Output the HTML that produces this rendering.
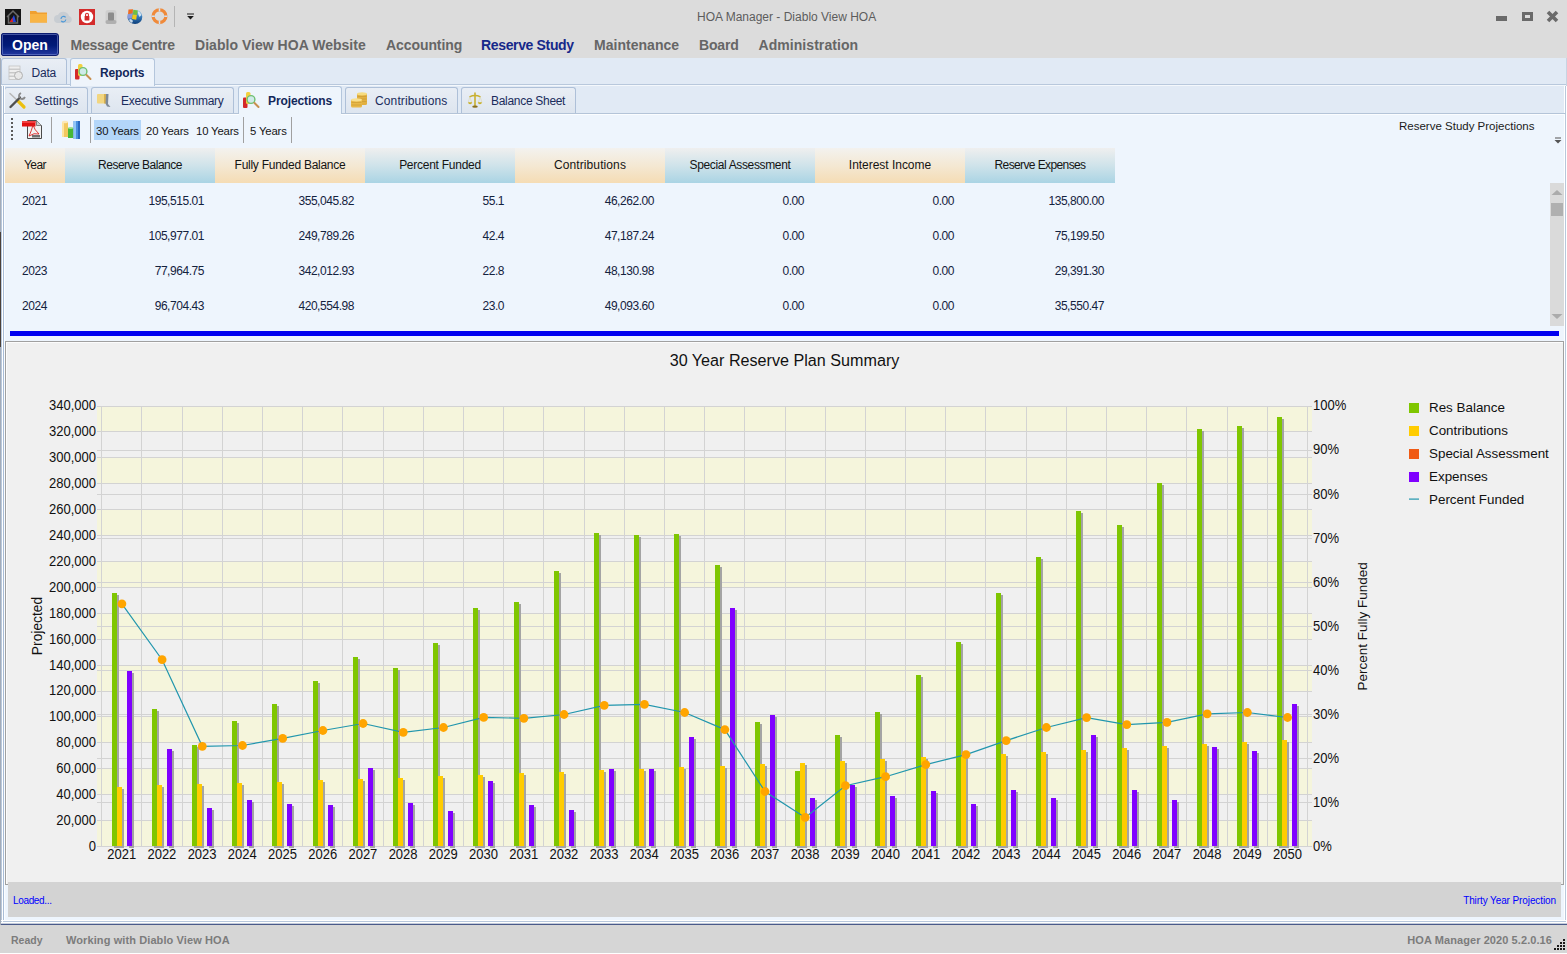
<!DOCTYPE html>
<html><head><meta charset="utf-8"><title>HOA Manager - Diablo View HOA</title>
<style>
*{margin:0;padding:0;box-sizing:border-box}
html,body{width:1567px;height:954px;overflow:hidden;background:#dcdcdc;font-family:"Liberation Sans", sans-serif;}
.a{position:absolute}
.t{position:absolute;white-space:nowrap;line-height:1}
.menu{font-weight:bold;font-size:14px;color:#666;letter-spacing:-0.2px}
.tab{position:absolute;border:1px solid #aec0d8;border-bottom:none;border-radius:3px 3px 0 0;background:linear-gradient(#e9eef5,#dde5ef)}
.tab.sel{background:#eef4fb;border-color:#b4c6dc}
.tabtxt{position:absolute;white-space:nowrap;line-height:1;font-size:12px;color:#1a2c5c}
.hdr{position:absolute;top:148px;height:35px;font-size:12px;color:#141414;text-align:center;line-height:35px}
.hp{background:linear-gradient(#f3f2ef 0%,#f4e8d3 50%,#f5dcb4 100%)}
.hb{background:linear-gradient(#efefef 0%,#cfe3ea 50%,#aad4e4 100%)}
.cell{position:absolute;font-size:12px;letter-spacing:-0.45px;color:#14223e;line-height:1;white-space:nowrap}
</style></head><body>

<div class="a" style="left:0;top:0;width:1567px;height:58px;background:#dcdcdc"></div>
<svg class="a" style="left:0;top:0" width="200" height="32" viewBox="0 0 200 32">
<rect x="5" y="9" width="16" height="16" fill="#161616"/>
<path d="M7 17 L13 11 L19 17 M8.5 16 V23 H17.5 V16" fill="none" stroke="#6a6a6a" stroke-width="1.5"/>
<path d="M10 22 L14 15 L16 22 Z" fill="#2046e0"/><path d="M9.5 22 L12.5 17.5 L13 22Z" fill="#e02020"/>
<path d="M30 11 h6 l1.5 1.5 h9.5 v10 h-17 z" fill="#f0a030"/><rect x="30" y="14" width="17" height="8.5" fill="#f8b445"/>
<path d="M58 23 a4 4 0 0 1 0-8 a6 6 0 0 1 11 1 a3.6 3.6 0 0 1 0 7z" fill="#c8cdd2"/>
<path d="M61 19 a2.6 2.6 0 0 1 4.6-1.6 M65.8 19.5 a2.6 2.6 0 0 1-4.6 1.4" fill="none" stroke="#4a98d8" stroke-width="1.1"/>
<rect x="79" y="9" width="16" height="16" fill="#d42b2b"/><circle cx="87" cy="17" r="6.2" fill="#fff"/>
<rect x="84.6" y="16" width="4.8" height="4.5" rx="0.6" fill="#d42b2b"/><path d="M85.6 16.2 v-1.6 a1.4 1.4 0 0 1 2.8 0 v1.6" fill="none" stroke="#d42b2b" stroke-width="1.1"/>
<rect x="105.5" y="10" width="11" height="14" rx="2.5" fill="#cfcfcf"/><rect x="105.5" y="20" width="11" height="4" rx="2" fill="#b0b0b0"/><rect x="108" y="12.5" width="6" height="8" rx="1" fill="#8c8c8c"/>
<defs><linearGradient id="gl" x1="0" y1="0" x2="0" y2="1"><stop offset="0" stop-color="#b8dcf0"/><stop offset="0.45" stop-color="#3a80c0"/><stop offset="1" stop-color="#0a3c78"/></linearGradient></defs>
<circle cx="135" cy="16.8" r="7.3" fill="url(#gl)"/>
<path d="M137.5 11 q3 1 4 4 l-2 2 -1-2z M130 19 q2 0 3 2 l-1 2 q-2-1-3-3z" fill="#e8f2f8" opacity="0.85"/>
<path d="M128.5 9.5 l4.5 -0.3 -0.4 4.3 -4.6 0.5z" fill="#f06a20"/><path d="M133.3 9.8 l4.5 0.6 -0.8 4.6 -4 -0.6z" fill="#70c040"/>
<path d="M127.6 14.2 l4.7 -0.4 -0.5 4.6 -4.6 0.4z" fill="#8a9ad8"/><path d="M132.5 14.5 l4.3 0.6 -0.6 4.6 -4.2 -0.7z" fill="#f0c818"/>
<circle cx="159.5" cy="16.2" r="6.4" fill="none" stroke="#f08a3a" stroke-width="3.2"/>
<path d="M159.5 8.3 v3.2 M159.5 20.9 v3.2 M151.6 16.2 h3.2 M164.2 16.2 h3.2" stroke="#d0e2f4" stroke-width="1.5"/>
<rect x="174" y="6" width="1" height="21" fill="#b4b4b4"/>
<rect x="187" y="13.5" width="7" height="1" fill="#1a1a1a"/><path d="M187.2 16 h6.6 l-3.3 3.5z" fill="#1a1a1a"/>
</svg>
<div class="t" style="left:697px;top:11px;font-size:12px;color:#5c5c5c">HOA Manager - Diablo View HOA</div>
<svg class="a" style="left:1490px;top:5px" width="77" height="24" viewBox="1490 5 77 24">
<rect x="1496" y="16" width="11" height="5" fill="#6a6a6a"/>
<path d="M1522 12 h11 v9 h-11z M1525 15 v3 h5 v-3z" fill="#6a6a6a" fill-rule="evenodd"/>
<path d="M1548 12 L1557 21 M1557 12 L1548 21" stroke="#6a6a6a" stroke-width="3.6"/>
</svg>
<div class="a" style="left:1px;top:33px;width:58px;height:23px;border-radius:2px 3px 3px 2px;background:linear-gradient(#001068,#001a78 55%,#2238a0);border:1px solid #0c1c70;box-shadow:inset 0 0 0 1px rgba(120,140,210,0.55)"></div>
<div class="t menu" style="left:12px;top:38px;color:#fff;letter-spacing:0">Open</div>
<div class="t menu" style="left:70.5px;top:38px;color:#666;letter-spacing:-0.22px">Message Centre</div>
<div class="t menu" style="left:195px;top:38px;color:#666;letter-spacing:0.03px">Diablo View HOA Website</div>
<div class="t menu" style="left:386px;top:38px;color:#666;letter-spacing:-0.08px">Accounting</div>
<div class="t menu" style="left:481px;top:38px;color:#16288a;letter-spacing:-0.35px">Reserve Study</div>
<div class="t menu" style="left:594px;top:38px;color:#666;letter-spacing:0.03px">Maintenance</div>
<div class="t menu" style="left:699px;top:38px;color:#666;letter-spacing:-0.17px">Board</div>
<div class="t menu" style="left:758.5px;top:38px;color:#666;letter-spacing:0.06px">Administration</div>
<div class="a" style="left:0;top:58px;width:1567px;height:897px;background:#e1eaf5"></div>
<div class="a" style="left:0;top:58px;width:1px;height:897px;background:#a4acb8"></div>
<div class="a" style="left:1566px;top:58px;width:1px;height:30px;background:#c8d4e2"></div>
<div class="a" style="left:0;top:232px;width:1px;height:115px;background:#4a4038"></div>
<div class="a" style="left:1px;top:84px;width:1565px;height:1px;background:#b8c8dc"></div>
<div class="a" style="left:1px;top:85px;width:1565px;height:1px;background:#f4f8fc"></div>
<div class="tab" style="left:1px;top:58px;width:66px;height:26px"></div>
<div class="tab sel" style="left:70px;top:58px;width:85px;height:28px"></div>
<div class="tabtxt" style="left:31.5px;top:67px;letter-spacing:-0.2px">Data</div>
<div class="tabtxt" style="left:100px;top:67px;letter-spacing:-0.15px;font-weight:bold;color:#13285a">Reports</div>
<svg class="a" style="left:0;top:56px" width="160" height="30" viewBox="0 56 160 30">
<g fill="#eeeeee" stroke="#c4c4c4" stroke-width="0.8"><rect x="9" y="66" width="11" height="3"/><rect x="9" y="69.5" width="11" height="3"/><rect x="9" y="73" width="11" height="3"/><rect x="9" y="76.5" width="10" height="3"/></g>
<circle cx="18.5" cy="75.5" r="4" fill="#e8e8e8" stroke="#b0b0b0" stroke-width="1"/>
<rect x="75" y="69" width="4.5" height="10.5" rx="1" fill="#d42a2a"/><rect x="78" y="64" width="4.5" height="12" rx="1.5" fill="#f2d040"/>
<circle cx="83" cy="71.5" r="3.9" fill="#cfeaea" stroke="#70c070" stroke-width="1.4"/><path d="M86.5 75 L90.5 79" stroke="#c89050" stroke-width="2" stroke-linecap="round"/>
</svg>
<div class="a" style="left:1px;top:113px;width:1565px;height:1px;background:#b4c4d8"></div>
<div class="tab" style="left:4px;top:87px;width:84px;height:26px"></div>
<div class="tab" style="left:91px;top:87px;width:143px;height:26px"></div>
<div class="tab sel" style="left:238px;top:86px;width:104px;height:28px;background:#eef5fc"></div>
<div class="tab" style="left:345px;top:87px;width:113px;height:26px"></div>
<div class="tab" style="left:461px;top:87px;width:115px;height:26px"></div>
<div class="tabtxt" style="left:34.5px;top:94.5px;letter-spacing:0.05px">Settings</div>
<div class="tabtxt" style="left:121px;top:94.5px;letter-spacing:-0.24px">Executive Summary</div>
<div class="tabtxt" style="left:268px;top:94.5px;letter-spacing:-0.11px;font-weight:bold;color:#13285a">Projections</div>
<div class="tabtxt" style="left:375px;top:94.5px;letter-spacing:0.13px">Contributions</div>
<div class="tabtxt" style="left:491px;top:94.5px;letter-spacing:-0.3px">Balance Sheet</div>
<svg class="a" style="left:0;top:86px" width="560" height="28" viewBox="0 86 560 28">
<path d="M10 93.5 L17.5 100.5" stroke="#b8b8b8" stroke-width="1.6" stroke-linecap="round"/>
<path d="M18.5 101.5 L24 107" stroke="#ecc010" stroke-width="3.2" stroke-linecap="round"/>
<path d="M10.5 107 L20 97.5" stroke="#505050" stroke-width="2.4" stroke-linecap="round"/>
<path d="M19.5 98 q-1.5-3.5 1.5-5 M20 98.5 q3.5 1.5 5-1.5" fill="none" stroke="#8a8a8a" stroke-width="1.8"/>
<rect x="97" y="94" width="9.5" height="9.5" rx="1" fill="#f2d680"/><rect x="104" y="94" width="2.5" height="9.5" fill="#d8b050"/>
<path d="M106 94 l2.5 0 -0.5 10 2.5 3 -3.5 -0.5 -1.5 -3z" fill="#7e8a98"/>
<rect x="243" y="97.5" width="4.5" height="10.5" rx="1" fill="#d42a2a"/><rect x="246" y="92" width="4.5" height="12" rx="1.5" fill="#f2d040"/>
<circle cx="251" cy="99.5" r="3.9" fill="#cfeaea" stroke="#70c070" stroke-width="1.4"/><path d="M254.5 103 L258.5 107" stroke="#c89050" stroke-width="2" stroke-linecap="round"/>
<rect x="357" y="93.5" width="10" height="11.5" rx="1.5" fill="#e2b040"/><ellipse cx="362" cy="93.8" rx="5" ry="1.6" fill="#f6dc80"/>
<path d="M357.5 96.5 h9 M357.5 99 h9 M357.5 101.5 h9" stroke="#c89830" stroke-width="0.6"/>
<rect x="351" y="99.5" width="11" height="8" rx="1.5" fill="#e8b848"/><ellipse cx="356.5" cy="99.8" rx="5.5" ry="1.6" fill="#f8e090"/>
<path d="M351.5 102.5 h10 M351.5 105 h10" stroke="#c89830" stroke-width="0.6"/>
<path d="M475 92.5 V106" stroke="#c8b030" stroke-width="1.6"/>
<path d="M469.5 96.8 Q475 94 480.5 96.8" fill="none" stroke="#c8b030" stroke-width="1.5"/>
<path d="M469.8 97 L468.2 102.5 M469.8 97 L471.8 102.5 M480.2 97 L478.2 102.5 M480.2 97 L482 102.5" stroke="#d8d0a0" stroke-width="0.5"/>
<path d="M468 102.3 h4.2 q-0.3 1.9 -2.1 1.9 q-1.8 0 -2.1 -1.9z M477.8 102.3 h4.2 q-0.3 1.9 -2.1 1.9 q-1.8 0 -2.1 -1.9z" fill="#c8b028"/>
<ellipse cx="475" cy="106.7" rx="2.8" ry="1.1" fill="#8a7020"/>
</svg>
<div class="a" style="left:4px;top:114px;width:1561px;height:807px;background:#eef5fd"></div>
<div class="a" style="left:1px;top:86px;width:1px;height:838px;background:#b8c8dc"></div>
<div class="a" style="left:2px;top:86px;width:1px;height:838px;background:#ffffff"></div>
<div class="a" style="left:3px;top:86px;width:1px;height:838px;background:#a8bcd6"></div>
<div class="a" style="left:4px;top:86px;width:1px;height:838px;background:#fbfdff"></div>
<div class="a" style="left:1564px;top:86px;width:1px;height:838px;background:#ffffff"></div>
<div class="a" style="left:1565px;top:86px;width:1px;height:838px;background:#b8c8dc"></div>
<div class="a" style="left:1566px;top:86px;width:1px;height:838px;background:#ffffff"></div>
<div class="a" style="left:3px;top:113px;width:1563px;height:1px;background:#b4c4d8"></div>
<div class="a" style="left:4px;top:114px;width:1561px;height:1px;background:#fbfdff"></div>
<div class="a" style="left:239px;top:112px;width:102px;height:3px;background:#eef5fc"></div>
<svg class="a" style="left:0;top:114px" width="300" height="34" viewBox="0 114 300 34">
<g fill="#5c5c5c"><rect x="11" y="118" width="2" height="2"/><rect x="11" y="122" width="2" height="2"/><rect x="11" y="126" width="2" height="2"/><rect x="11" y="130" width="2" height="2"/><rect x="11" y="134" width="2" height="2"/><rect x="11" y="138" width="2" height="2"/></g>
<path d="M27.5 120.5 h9 l5 5 v13 h-14z" fill="#f2f2f2" stroke="#4a4a4a" stroke-width="1"/>
<path d="M36.5 120.5 v5 h5" fill="#d0d0d0" stroke="#6a6a6a" stroke-width="0.8"/>
<rect x="22" y="121" width="13.5" height="5.5" fill="#e01010"/><rect x="22" y="121" width="13.5" height="2" fill="#f04040"/>
<path d="M29 136 q2.5-5 4-11 q1.5 5 6 9 q-5-1.5-10 2z" fill="none" stroke="#d82020" stroke-width="0.9"/>
<rect x="32" y="135" width="8" height="2.5" fill="#707070"/>
<rect x="51" y="117" width="1" height="26" fill="#a0a0a0"/>
<rect x="62" y="122" width="6" height="15" fill="#f2c860"/><rect x="62" y="122" width="2" height="15" fill="#fde4a0"/><ellipse cx="65" cy="122" rx="3" ry="1.2" fill="#fbe8b8"/>
<rect x="68" y="128" width="5.5" height="10" fill="#48b838"/><ellipse cx="70.7" cy="128" rx="2.8" ry="1.1" fill="#a0e090"/>
<rect x="73.5" y="121" width="6.5" height="18" fill="#4a90e0"/><rect x="73.5" y="121" width="2.5" height="18" fill="#90c4f8"/><rect x="78" y="121" width="2" height="18" fill="#2a68c0"/>
<rect x="90" y="117" width="1" height="26" fill="#a0a0a0"/>
<rect x="94" y="120" width="47" height="20" fill="#b3d6f9"/>
<rect x="243" y="117" width="1" height="26" fill="#a0a0a0"/>
<rect x="291" y="117" width="1" height="26" fill="#a0a0a0"/>
</svg>
<div class="t" style="left:96px;top:125.5px;font-size:11.3px;letter-spacing:-0.15px;color:#141414">30 Years</div>
<div class="t" style="left:146px;top:125.5px;font-size:11.3px;letter-spacing:-0.15px;color:#141414">20 Years</div>
<div class="t" style="left:196px;top:125.5px;font-size:11.3px;letter-spacing:-0.15px;color:#141414">10 Years</div>
<div class="t" style="left:250px;top:125.5px;font-size:11.3px;letter-spacing:-0.15px;color:#141414">5 Years</div>
<div class="t" style="left:1399px;top:121px;font-size:11.5px;color:#1a1a1a">Reserve Study Projections</div>
<svg class="a" style="left:1552px;top:136px" width="12" height="10"><rect x="3" y="1.5" width="6" height="1" fill="#555"/><path d="M2.5 4 h7 l-3.5 3.5z" fill="#555"/></svg>
<div class="hdr hp" style="left:5px;width:60px;letter-spacing:-0.55px">Year</div>
<div class="hdr hb" style="left:65px;width:150px;letter-spacing:-0.5px">Reserve Balance</div>
<div class="hdr hp" style="left:215px;width:150px;letter-spacing:-0.26px">Fully Funded Balance</div>
<div class="hdr hb" style="left:365px;width:150px;letter-spacing:-0.26px">Percent Funded</div>
<div class="hdr hp" style="left:515px;width:150px;letter-spacing:0.1px">Contributions</div>
<div class="hdr hb" style="left:665px;width:150px;letter-spacing:-0.36px">Special Assessment</div>
<div class="hdr hp" style="left:815px;width:150px;letter-spacing:-0.03px">Interest Income</div>
<div class="hdr hb" style="left:965px;width:150px;letter-spacing:-0.61px">Reserve Expenses</div>
<div class="cell" style="left:22px;top:195px">2021</div>
<div class="cell" style="right:1363px;top:195px">195,515.01</div>
<div class="cell" style="right:1213px;top:195px">355,045.82</div>
<div class="cell" style="right:1063px;top:195px">55.1</div>
<div class="cell" style="right:913px;top:195px">46,262.00</div>
<div class="cell" style="right:763px;top:195px">0.00</div>
<div class="cell" style="right:613px;top:195px">0.00</div>
<div class="cell" style="right:463px;top:195px">135,800.00</div>
<div class="cell" style="left:22px;top:230px">2022</div>
<div class="cell" style="right:1363px;top:230px">105,977.01</div>
<div class="cell" style="right:1213px;top:230px">249,789.26</div>
<div class="cell" style="right:1063px;top:230px">42.4</div>
<div class="cell" style="right:913px;top:230px">47,187.24</div>
<div class="cell" style="right:763px;top:230px">0.00</div>
<div class="cell" style="right:613px;top:230px">0.00</div>
<div class="cell" style="right:463px;top:230px">75,199.50</div>
<div class="cell" style="left:22px;top:265px">2023</div>
<div class="cell" style="right:1363px;top:265px">77,964.75</div>
<div class="cell" style="right:1213px;top:265px">342,012.93</div>
<div class="cell" style="right:1063px;top:265px">22.8</div>
<div class="cell" style="right:913px;top:265px">48,130.98</div>
<div class="cell" style="right:763px;top:265px">0.00</div>
<div class="cell" style="right:613px;top:265px">0.00</div>
<div class="cell" style="right:463px;top:265px">29,391.30</div>
<div class="cell" style="left:22px;top:300px">2024</div>
<div class="cell" style="right:1363px;top:300px">96,704.43</div>
<div class="cell" style="right:1213px;top:300px">420,554.98</div>
<div class="cell" style="right:1063px;top:300px">23.0</div>
<div class="cell" style="right:913px;top:300px">49,093.60</div>
<div class="cell" style="right:763px;top:300px">0.00</div>
<div class="cell" style="right:613px;top:300px">0.00</div>
<div class="cell" style="right:463px;top:300px">35,550.47</div>
<svg class="a" style="left:1550px;top:183px" width="14" height="143" viewBox="1550 183 14 143">
<rect x="1550" y="183" width="14" height="143" fill="#dadada"/>
<path d="M1551.5 195 h11 l-5.5 -5z" fill="#ababab"/>
<rect x="1551" y="203" width="12" height="13" fill="#b0b0b0"/>
<path d="M1551.5 314 h11 l-5.5 5z" fill="#ababab"/>
</svg>
<div class="a" style="left:10px;top:331px;width:1549px;height:5px;background:#0000f0"></div>
<div class="a" style="left:5px;top:341px;width:1559px;height:544px;background:#f0f0f0;border:1px solid #a0a0a0;box-shadow:inset 1px 1px 0 #fcfcfc"></div>
<svg class="a" style="left:0;top:0" width="1567" height="954" viewBox="0 0 1567 954" font-family='"Liberation Sans", sans-serif'>
<rect x="97" y="820.00" width="1215" height="26.00" fill="#f5f5dc"/>
<rect x="97" y="768.00" width="1215" height="26.00" fill="#f5f5dc"/>
<rect x="97" y="716.00" width="1215" height="26.00" fill="#f5f5dc"/>
<rect x="97" y="665.00" width="1215" height="26.00" fill="#f5f5dc"/>
<rect x="97" y="613.00" width="1215" height="26.00" fill="#f5f5dc"/>
<rect x="97" y="561.00" width="1215" height="26.00" fill="#f5f5dc"/>
<rect x="97" y="509.00" width="1215" height="26.00" fill="#f5f5dc"/>
<rect x="97" y="457.00" width="1215" height="26.00" fill="#f5f5dc"/>
<rect x="97" y="406.00" width="1215" height="25.00" fill="#f5f5dc"/>
<path d="M97 846.5H1312M97 820.5H1312M97 794.5H1312M97 768.5H1312M97 742.5H1312M97 716.5H1312M97 691.5H1312M97 665.5H1312M97 639.5H1312M97 613.5H1312M97 587.5H1312M97 561.5H1312M97 535.5H1312M97 509.5H1312M97 483.5H1312M97 457.5H1312M97 431.5H1312M97 406.5H1312M97 846.5H1312M97 802.5H1312M97 758.5H1312M97 714.5H1312M97 670.5H1312M97 626.5H1312M97 582.5H1312M97 538.5H1312M97 494.5H1312M97 450.5H1312M97 406.5H1312M101.5 406V846M141.5 406V846M182.5 406V846M222.5 406V846M262.5 406V846M302.5 406V846M342.5 406V846M383.5 406V846M423.5 406V846M463.5 406V846M503.5 406V846M543.5 406V846M584.5 406V846M624.5 406V846M664.5 406V846M704.5 406V846M744.5 406V846M785.5 406V846M825.5 406V846M865.5 406V846M905.5 406V846M945.5 406V846M985.5 406V846M1026.5 406V846M1066.5 406V846M1106.5 406V846M1146.5 406V846M1186.5 406V846M1227.5 406V846M1267.5 406V846M1307.5 406V846" stroke="#d3d3d3" stroke-width="1" fill="none"/>
<g shape-rendering="crispEdges"><rect x="114" y="595" width="5" height="253" fill="#a4a4a4"/><rect x="112" y="593" width="5" height="253" fill="#7fc600"/><rect x="119" y="789" width="5" height="59" fill="#a4a4a4"/><rect x="117" y="787" width="5" height="59" fill="#ffcc00"/><rect x="129" y="673" width="5" height="175" fill="#a4a4a4"/><rect x="127" y="671" width="5" height="175" fill="#8000ff"/><rect x="154" y="711" width="5" height="137" fill="#a4a4a4"/><rect x="152" y="709" width="5" height="137" fill="#7fc600"/><rect x="159" y="787" width="5" height="61" fill="#a4a4a4"/><rect x="157" y="785" width="5" height="61" fill="#ffcc00"/><rect x="169" y="751" width="5" height="97" fill="#a4a4a4"/><rect x="167" y="749" width="5" height="97" fill="#8000ff"/><rect x="194" y="747" width="5" height="101" fill="#a4a4a4"/><rect x="192" y="745" width="5" height="101" fill="#7fc600"/><rect x="199" y="786" width="5" height="62" fill="#a4a4a4"/><rect x="197" y="784" width="5" height="62" fill="#ffcc00"/><rect x="209" y="810" width="5" height="38" fill="#a4a4a4"/><rect x="207" y="808" width="5" height="38" fill="#8000ff"/><rect x="234" y="723" width="5" height="125" fill="#a4a4a4"/><rect x="232" y="721" width="5" height="125" fill="#7fc600"/><rect x="239" y="785" width="5" height="63" fill="#a4a4a4"/><rect x="237" y="783" width="5" height="63" fill="#ffcc00"/><rect x="249" y="802" width="5" height="46" fill="#a4a4a4"/><rect x="247" y="800" width="5" height="46" fill="#8000ff"/><rect x="274" y="706" width="5" height="142" fill="#a4a4a4"/><rect x="272" y="704" width="5" height="142" fill="#7fc600"/><rect x="279" y="784" width="5" height="64" fill="#a4a4a4"/><rect x="277" y="782" width="5" height="64" fill="#ffcc00"/><rect x="289" y="806" width="5" height="42" fill="#a4a4a4"/><rect x="287" y="804" width="5" height="42" fill="#8000ff"/><rect x="315" y="683" width="5" height="165" fill="#a4a4a4"/><rect x="313" y="681" width="5" height="165" fill="#7fc600"/><rect x="320" y="782" width="5" height="66" fill="#a4a4a4"/><rect x="318" y="780" width="5" height="66" fill="#ffcc00"/><rect x="330" y="807" width="5" height="41" fill="#a4a4a4"/><rect x="328" y="805" width="5" height="41" fill="#8000ff"/><rect x="355" y="659" width="5" height="189" fill="#a4a4a4"/><rect x="353" y="657" width="5" height="189" fill="#7fc600"/><rect x="360" y="781" width="5" height="67" fill="#a4a4a4"/><rect x="358" y="779" width="5" height="67" fill="#ffcc00"/><rect x="370" y="770" width="5" height="78" fill="#a4a4a4"/><rect x="368" y="768" width="5" height="78" fill="#8000ff"/><rect x="395" y="670" width="5" height="178" fill="#a4a4a4"/><rect x="393" y="668" width="5" height="178" fill="#7fc600"/><rect x="400" y="780" width="5" height="68" fill="#a4a4a4"/><rect x="398" y="778" width="5" height="68" fill="#ffcc00"/><rect x="410" y="805" width="5" height="43" fill="#a4a4a4"/><rect x="408" y="803" width="5" height="43" fill="#8000ff"/><rect x="435" y="645" width="5" height="203" fill="#a4a4a4"/><rect x="433" y="643" width="5" height="203" fill="#7fc600"/><rect x="440" y="778" width="5" height="70" fill="#a4a4a4"/><rect x="438" y="776" width="5" height="70" fill="#ffcc00"/><rect x="450" y="813" width="5" height="35" fill="#a4a4a4"/><rect x="448" y="811" width="5" height="35" fill="#8000ff"/><rect x="475" y="610" width="5" height="238" fill="#a4a4a4"/><rect x="473" y="608" width="5" height="238" fill="#7fc600"/><rect x="480" y="777" width="5" height="71" fill="#a4a4a4"/><rect x="478" y="775" width="5" height="71" fill="#ffcc00"/><rect x="490" y="783" width="5" height="65" fill="#a4a4a4"/><rect x="488" y="781" width="5" height="65" fill="#8000ff"/><rect x="516" y="604" width="5" height="244" fill="#a4a4a4"/><rect x="514" y="602" width="5" height="244" fill="#7fc600"/><rect x="521" y="775" width="5" height="73" fill="#a4a4a4"/><rect x="519" y="773" width="5" height="73" fill="#ffcc00"/><rect x="531" y="807" width="5" height="41" fill="#a4a4a4"/><rect x="529" y="805" width="5" height="41" fill="#8000ff"/><rect x="556" y="573" width="5" height="275" fill="#a4a4a4"/><rect x="554" y="571" width="5" height="275" fill="#7fc600"/><rect x="561" y="774" width="5" height="74" fill="#a4a4a4"/><rect x="559" y="772" width="5" height="74" fill="#ffcc00"/><rect x="571" y="812" width="5" height="36" fill="#a4a4a4"/><rect x="569" y="810" width="5" height="36" fill="#8000ff"/><rect x="596" y="535" width="5" height="313" fill="#a4a4a4"/><rect x="594" y="533" width="5" height="313" fill="#7fc600"/><rect x="601" y="772" width="5" height="76" fill="#a4a4a4"/><rect x="599" y="770" width="5" height="76" fill="#ffcc00"/><rect x="611" y="771" width="5" height="77" fill="#a4a4a4"/><rect x="609" y="769" width="5" height="77" fill="#8000ff"/><rect x="636" y="537" width="5" height="311" fill="#a4a4a4"/><rect x="634" y="535" width="5" height="311" fill="#7fc600"/><rect x="641" y="771" width="5" height="77" fill="#a4a4a4"/><rect x="639" y="769" width="5" height="77" fill="#ffcc00"/><rect x="651" y="771" width="5" height="77" fill="#a4a4a4"/><rect x="649" y="769" width="5" height="77" fill="#8000ff"/><rect x="676" y="536" width="5" height="312" fill="#a4a4a4"/><rect x="674" y="534" width="5" height="312" fill="#7fc600"/><rect x="681" y="769" width="5" height="79" fill="#a4a4a4"/><rect x="679" y="767" width="5" height="79" fill="#ffcc00"/><rect x="691" y="739" width="5" height="109" fill="#a4a4a4"/><rect x="689" y="737" width="5" height="109" fill="#8000ff"/><rect x="717" y="567" width="5" height="281" fill="#a4a4a4"/><rect x="715" y="565" width="5" height="281" fill="#7fc600"/><rect x="722" y="768" width="5" height="80" fill="#a4a4a4"/><rect x="720" y="766" width="5" height="80" fill="#ffcc00"/><rect x="732" y="610" width="5" height="238" fill="#a4a4a4"/><rect x="730" y="608" width="5" height="238" fill="#8000ff"/><rect x="757" y="724" width="5" height="124" fill="#a4a4a4"/><rect x="755" y="722" width="5" height="124" fill="#7fc600"/><rect x="762" y="766" width="5" height="82" fill="#a4a4a4"/><rect x="760" y="764" width="5" height="82" fill="#ffcc00"/><rect x="772" y="717" width="5" height="131" fill="#a4a4a4"/><rect x="770" y="715" width="5" height="131" fill="#8000ff"/><rect x="797" y="773" width="5" height="75" fill="#a4a4a4"/><rect x="795" y="771" width="5" height="75" fill="#7fc600"/><rect x="802" y="765" width="5" height="83" fill="#a4a4a4"/><rect x="800" y="763" width="5" height="83" fill="#ffcc00"/><rect x="812" y="800" width="5" height="48" fill="#a4a4a4"/><rect x="810" y="798" width="5" height="48" fill="#8000ff"/><rect x="837" y="737" width="5" height="111" fill="#a4a4a4"/><rect x="835" y="735" width="5" height="111" fill="#7fc600"/><rect x="842" y="763" width="5" height="85" fill="#a4a4a4"/><rect x="840" y="761" width="5" height="85" fill="#ffcc00"/><rect x="852" y="787" width="5" height="61" fill="#a4a4a4"/><rect x="850" y="785" width="5" height="61" fill="#8000ff"/><rect x="877" y="714" width="5" height="134" fill="#a4a4a4"/><rect x="875" y="712" width="5" height="134" fill="#7fc600"/><rect x="882" y="761" width="5" height="87" fill="#a4a4a4"/><rect x="880" y="759" width="5" height="87" fill="#ffcc00"/><rect x="892" y="798" width="5" height="50" fill="#a4a4a4"/><rect x="890" y="796" width="5" height="50" fill="#8000ff"/><rect x="918" y="677" width="5" height="171" fill="#a4a4a4"/><rect x="916" y="675" width="5" height="171" fill="#7fc600"/><rect x="923" y="759" width="5" height="89" fill="#a4a4a4"/><rect x="921" y="757" width="5" height="89" fill="#ffcc00"/><rect x="933" y="793" width="5" height="55" fill="#a4a4a4"/><rect x="931" y="791" width="5" height="55" fill="#8000ff"/><rect x="958" y="644" width="5" height="204" fill="#a4a4a4"/><rect x="956" y="642" width="5" height="204" fill="#7fc600"/><rect x="963" y="758" width="5" height="90" fill="#a4a4a4"/><rect x="961" y="756" width="5" height="90" fill="#ffcc00"/><rect x="973" y="806" width="5" height="42" fill="#a4a4a4"/><rect x="971" y="804" width="5" height="42" fill="#8000ff"/><rect x="998" y="595" width="5" height="253" fill="#a4a4a4"/><rect x="996" y="593" width="5" height="253" fill="#7fc600"/><rect x="1003" y="756" width="5" height="92" fill="#a4a4a4"/><rect x="1001" y="754" width="5" height="92" fill="#ffcc00"/><rect x="1013" y="792" width="5" height="56" fill="#a4a4a4"/><rect x="1011" y="790" width="5" height="56" fill="#8000ff"/><rect x="1038" y="559" width="5" height="289" fill="#a4a4a4"/><rect x="1036" y="557" width="5" height="289" fill="#7fc600"/><rect x="1043" y="754" width="5" height="94" fill="#a4a4a4"/><rect x="1041" y="752" width="5" height="94" fill="#ffcc00"/><rect x="1053" y="800" width="5" height="48" fill="#a4a4a4"/><rect x="1051" y="798" width="5" height="48" fill="#8000ff"/><rect x="1078" y="513" width="5" height="335" fill="#a4a4a4"/><rect x="1076" y="511" width="5" height="335" fill="#7fc600"/><rect x="1083" y="752" width="5" height="96" fill="#a4a4a4"/><rect x="1081" y="750" width="5" height="96" fill="#ffcc00"/><rect x="1093" y="737" width="5" height="111" fill="#a4a4a4"/><rect x="1091" y="735" width="5" height="111" fill="#8000ff"/><rect x="1119" y="527" width="5" height="321" fill="#a4a4a4"/><rect x="1117" y="525" width="5" height="321" fill="#7fc600"/><rect x="1124" y="750" width="5" height="98" fill="#a4a4a4"/><rect x="1122" y="748" width="5" height="98" fill="#ffcc00"/><rect x="1134" y="792" width="5" height="56" fill="#a4a4a4"/><rect x="1132" y="790" width="5" height="56" fill="#8000ff"/><rect x="1159" y="485" width="5" height="363" fill="#a4a4a4"/><rect x="1157" y="483" width="5" height="363" fill="#7fc600"/><rect x="1164" y="748" width="5" height="100" fill="#a4a4a4"/><rect x="1162" y="746" width="5" height="100" fill="#ffcc00"/><rect x="1174" y="802" width="5" height="46" fill="#a4a4a4"/><rect x="1172" y="800" width="5" height="46" fill="#8000ff"/><rect x="1199" y="431" width="5" height="417" fill="#a4a4a4"/><rect x="1197" y="429" width="5" height="417" fill="#7fc600"/><rect x="1204" y="746" width="5" height="102" fill="#a4a4a4"/><rect x="1202" y="744" width="5" height="102" fill="#ffcc00"/><rect x="1214" y="749" width="5" height="99" fill="#a4a4a4"/><rect x="1212" y="747" width="5" height="99" fill="#8000ff"/><rect x="1239" y="428" width="5" height="420" fill="#a4a4a4"/><rect x="1237" y="426" width="5" height="420" fill="#7fc600"/><rect x="1244" y="744" width="5" height="104" fill="#a4a4a4"/><rect x="1242" y="742" width="5" height="104" fill="#ffcc00"/><rect x="1254" y="753" width="5" height="95" fill="#a4a4a4"/><rect x="1252" y="751" width="5" height="95" fill="#8000ff"/><rect x="1279" y="419" width="5" height="429" fill="#a4a4a4"/><rect x="1277" y="417" width="5" height="429" fill="#7fc600"/><rect x="1284" y="742" width="5" height="106" fill="#a4a4a4"/><rect x="1282" y="740" width="5" height="106" fill="#ffcc00"/><rect x="1294" y="706" width="5" height="142" fill="#a4a4a4"/><rect x="1292" y="704" width="5" height="142" fill="#8000ff"/></g>
<polyline points="121.90,603.8 162.09,659.7 202.29,746.3 242.49,745.5 282.68,738.4 322.88,730.5 363.07,723.5 403.26,732.3 443.46,727.5 483.65,717.4 523.85,718.3 564.04,714.5 604.24,705.3 644.43,704.4 684.63,712.5 724.82,729.6 765.02,791.5 805.22,817.4 845.41,785.7 885.61,776.7 925.80,764.6 966.00,754.6 1006.19,740.6 1046.38,727.5 1086.58,717.6 1126.78,724.6 1166.97,722.4 1207.17,713.8 1247.36,712.5 1287.56,717.5" fill="none" stroke="#2196ad" stroke-width="1.2"/>
<circle cx="121.90" cy="603.8" r="4.4" fill="#ffa500"/>
<circle cx="162.09" cy="659.7" r="4.4" fill="#ffa500"/>
<circle cx="202.29" cy="746.3" r="4.4" fill="#ffa500"/>
<circle cx="242.49" cy="745.5" r="4.4" fill="#ffa500"/>
<circle cx="282.68" cy="738.4" r="4.4" fill="#ffa500"/>
<circle cx="322.88" cy="730.5" r="4.4" fill="#ffa500"/>
<circle cx="363.07" cy="723.5" r="4.4" fill="#ffa500"/>
<circle cx="403.26" cy="732.3" r="4.4" fill="#ffa500"/>
<circle cx="443.46" cy="727.5" r="4.4" fill="#ffa500"/>
<circle cx="483.65" cy="717.4" r="4.4" fill="#ffa500"/>
<circle cx="523.85" cy="718.3" r="4.4" fill="#ffa500"/>
<circle cx="564.04" cy="714.5" r="4.4" fill="#ffa500"/>
<circle cx="604.24" cy="705.3" r="4.4" fill="#ffa500"/>
<circle cx="644.43" cy="704.4" r="4.4" fill="#ffa500"/>
<circle cx="684.63" cy="712.5" r="4.4" fill="#ffa500"/>
<circle cx="724.82" cy="729.6" r="4.4" fill="#ffa500"/>
<circle cx="765.02" cy="791.5" r="4.4" fill="#ffa500"/>
<circle cx="805.22" cy="817.4" r="4.4" fill="#ffa500"/>
<circle cx="845.41" cy="785.7" r="4.4" fill="#ffa500"/>
<circle cx="885.61" cy="776.7" r="4.4" fill="#ffa500"/>
<circle cx="925.80" cy="764.6" r="4.4" fill="#ffa500"/>
<circle cx="966.00" cy="754.6" r="4.4" fill="#ffa500"/>
<circle cx="1006.19" cy="740.6" r="4.4" fill="#ffa500"/>
<circle cx="1046.38" cy="727.5" r="4.4" fill="#ffa500"/>
<circle cx="1086.58" cy="717.6" r="4.4" fill="#ffa500"/>
<circle cx="1126.78" cy="724.6" r="4.4" fill="#ffa500"/>
<circle cx="1166.97" cy="722.4" r="4.4" fill="#ffa500"/>
<circle cx="1207.17" cy="713.8" r="4.4" fill="#ffa500"/>
<circle cx="1247.36" cy="712.5" r="4.4" fill="#ffa500"/>
<circle cx="1287.56" cy="717.5" r="4.4" fill="#ffa500"/>
<text x="96" y="850.9" text-anchor="end" font-size="13.8" textLength="7.23" lengthAdjust="spacingAndGlyphs" fill="#111">0</text>
<text x="96" y="825.0" text-anchor="end" font-size="13.8" textLength="39.76" lengthAdjust="spacingAndGlyphs" fill="#111">20,000</text>
<text x="96" y="799.1" text-anchor="end" font-size="13.8" textLength="39.76" lengthAdjust="spacingAndGlyphs" fill="#111">40,000</text>
<text x="96" y="773.2" text-anchor="end" font-size="13.8" textLength="39.76" lengthAdjust="spacingAndGlyphs" fill="#111">60,000</text>
<text x="96" y="747.3" text-anchor="end" font-size="13.8" textLength="39.76" lengthAdjust="spacingAndGlyphs" fill="#111">80,000</text>
<text x="96" y="721.3" text-anchor="end" font-size="13.8" textLength="46.99" lengthAdjust="spacingAndGlyphs" fill="#111">100,000</text>
<text x="96" y="695.4" text-anchor="end" font-size="13.8" textLength="46.99" lengthAdjust="spacingAndGlyphs" fill="#111">120,000</text>
<text x="96" y="669.5" text-anchor="end" font-size="13.8" textLength="46.99" lengthAdjust="spacingAndGlyphs" fill="#111">140,000</text>
<text x="96" y="643.6" text-anchor="end" font-size="13.8" textLength="46.99" lengthAdjust="spacingAndGlyphs" fill="#111">160,000</text>
<text x="96" y="617.7" text-anchor="end" font-size="13.8" textLength="46.99" lengthAdjust="spacingAndGlyphs" fill="#111">180,000</text>
<text x="96" y="591.8" text-anchor="end" font-size="13.8" textLength="46.99" lengthAdjust="spacingAndGlyphs" fill="#111">200,000</text>
<text x="96" y="565.9" text-anchor="end" font-size="13.8" textLength="46.99" lengthAdjust="spacingAndGlyphs" fill="#111">220,000</text>
<text x="96" y="540.0" text-anchor="end" font-size="13.8" textLength="46.99" lengthAdjust="spacingAndGlyphs" fill="#111">240,000</text>
<text x="96" y="514.0" text-anchor="end" font-size="13.8" textLength="46.99" lengthAdjust="spacingAndGlyphs" fill="#111">260,000</text>
<text x="96" y="488.1" text-anchor="end" font-size="13.8" textLength="46.99" lengthAdjust="spacingAndGlyphs" fill="#111">280,000</text>
<text x="96" y="462.2" text-anchor="end" font-size="13.8" textLength="46.99" lengthAdjust="spacingAndGlyphs" fill="#111">300,000</text>
<text x="96" y="436.3" text-anchor="end" font-size="13.8" textLength="46.99" lengthAdjust="spacingAndGlyphs" fill="#111">320,000</text>
<text x="96" y="410.4" text-anchor="end" font-size="13.8" textLength="46.99" lengthAdjust="spacingAndGlyphs" fill="#111">340,000</text>
<text x="1313" y="850.9" font-size="13.8" textLength="18.79" lengthAdjust="spacingAndGlyphs" fill="#111">0%</text>
<text x="1313" y="806.9" font-size="13.8" textLength="26.02" lengthAdjust="spacingAndGlyphs" fill="#111">10%</text>
<text x="1313" y="762.8" font-size="13.8" textLength="26.02" lengthAdjust="spacingAndGlyphs" fill="#111">20%</text>
<text x="1313" y="718.8" font-size="13.8" textLength="26.02" lengthAdjust="spacingAndGlyphs" fill="#111">30%</text>
<text x="1313" y="674.7" font-size="13.8" textLength="26.02" lengthAdjust="spacingAndGlyphs" fill="#111">40%</text>
<text x="1313" y="630.6" font-size="13.8" textLength="26.02" lengthAdjust="spacingAndGlyphs" fill="#111">50%</text>
<text x="1313" y="586.6" font-size="13.8" textLength="26.02" lengthAdjust="spacingAndGlyphs" fill="#111">60%</text>
<text x="1313" y="542.5" font-size="13.8" textLength="26.02" lengthAdjust="spacingAndGlyphs" fill="#111">70%</text>
<text x="1313" y="498.5" font-size="13.8" textLength="26.02" lengthAdjust="spacingAndGlyphs" fill="#111">80%</text>
<text x="1313" y="454.4" font-size="13.8" textLength="26.02" lengthAdjust="spacingAndGlyphs" fill="#111">90%</text>
<text x="1313" y="410.4" font-size="13.8" textLength="33.25" lengthAdjust="spacingAndGlyphs" fill="#111">100%</text>
<text x="121.7" y="858.8" text-anchor="middle" font-size="13.8" textLength="28.92" lengthAdjust="spacingAndGlyphs" fill="#111">2021</text>
<text x="161.9" y="858.8" text-anchor="middle" font-size="13.8" textLength="28.92" lengthAdjust="spacingAndGlyphs" fill="#111">2022</text>
<text x="202.1" y="858.8" text-anchor="middle" font-size="13.8" textLength="28.92" lengthAdjust="spacingAndGlyphs" fill="#111">2023</text>
<text x="242.3" y="858.8" text-anchor="middle" font-size="13.8" textLength="28.92" lengthAdjust="spacingAndGlyphs" fill="#111">2024</text>
<text x="282.5" y="858.8" text-anchor="middle" font-size="13.8" textLength="28.92" lengthAdjust="spacingAndGlyphs" fill="#111">2025</text>
<text x="322.7" y="858.8" text-anchor="middle" font-size="13.8" textLength="28.92" lengthAdjust="spacingAndGlyphs" fill="#111">2026</text>
<text x="362.9" y="858.8" text-anchor="middle" font-size="13.8" textLength="28.92" lengthAdjust="spacingAndGlyphs" fill="#111">2027</text>
<text x="403.1" y="858.8" text-anchor="middle" font-size="13.8" textLength="28.92" lengthAdjust="spacingAndGlyphs" fill="#111">2028</text>
<text x="443.3" y="858.8" text-anchor="middle" font-size="13.8" textLength="28.92" lengthAdjust="spacingAndGlyphs" fill="#111">2029</text>
<text x="483.5" y="858.8" text-anchor="middle" font-size="13.8" textLength="28.92" lengthAdjust="spacingAndGlyphs" fill="#111">2030</text>
<text x="523.7" y="858.8" text-anchor="middle" font-size="13.8" textLength="28.92" lengthAdjust="spacingAndGlyphs" fill="#111">2031</text>
<text x="563.9" y="858.8" text-anchor="middle" font-size="13.8" textLength="28.92" lengthAdjust="spacingAndGlyphs" fill="#111">2032</text>
<text x="604.1" y="858.8" text-anchor="middle" font-size="13.8" textLength="28.92" lengthAdjust="spacingAndGlyphs" fill="#111">2033</text>
<text x="644.3" y="858.8" text-anchor="middle" font-size="13.8" textLength="28.92" lengthAdjust="spacingAndGlyphs" fill="#111">2034</text>
<text x="684.5" y="858.8" text-anchor="middle" font-size="13.8" textLength="28.92" lengthAdjust="spacingAndGlyphs" fill="#111">2035</text>
<text x="724.7" y="858.8" text-anchor="middle" font-size="13.8" textLength="28.92" lengthAdjust="spacingAndGlyphs" fill="#111">2036</text>
<text x="764.9" y="858.8" text-anchor="middle" font-size="13.8" textLength="28.92" lengthAdjust="spacingAndGlyphs" fill="#111">2037</text>
<text x="805.1" y="858.8" text-anchor="middle" font-size="13.8" textLength="28.92" lengthAdjust="spacingAndGlyphs" fill="#111">2038</text>
<text x="845.3" y="858.8" text-anchor="middle" font-size="13.8" textLength="28.92" lengthAdjust="spacingAndGlyphs" fill="#111">2039</text>
<text x="885.5" y="858.8" text-anchor="middle" font-size="13.8" textLength="28.92" lengthAdjust="spacingAndGlyphs" fill="#111">2040</text>
<text x="925.7" y="858.8" text-anchor="middle" font-size="13.8" textLength="28.92" lengthAdjust="spacingAndGlyphs" fill="#111">2041</text>
<text x="965.9" y="858.8" text-anchor="middle" font-size="13.8" textLength="28.92" lengthAdjust="spacingAndGlyphs" fill="#111">2042</text>
<text x="1006.1" y="858.8" text-anchor="middle" font-size="13.8" textLength="28.92" lengthAdjust="spacingAndGlyphs" fill="#111">2043</text>
<text x="1046.3" y="858.8" text-anchor="middle" font-size="13.8" textLength="28.92" lengthAdjust="spacingAndGlyphs" fill="#111">2044</text>
<text x="1086.5" y="858.8" text-anchor="middle" font-size="13.8" textLength="28.92" lengthAdjust="spacingAndGlyphs" fill="#111">2045</text>
<text x="1126.7" y="858.8" text-anchor="middle" font-size="13.8" textLength="28.92" lengthAdjust="spacingAndGlyphs" fill="#111">2046</text>
<text x="1166.9" y="858.8" text-anchor="middle" font-size="13.8" textLength="28.92" lengthAdjust="spacingAndGlyphs" fill="#111">2047</text>
<text x="1207.1" y="858.8" text-anchor="middle" font-size="13.8" textLength="28.92" lengthAdjust="spacingAndGlyphs" fill="#111">2048</text>
<text x="1247.3" y="858.8" text-anchor="middle" font-size="13.8" textLength="28.92" lengthAdjust="spacingAndGlyphs" fill="#111">2049</text>
<text x="1287.5" y="858.8" text-anchor="middle" font-size="13.8" textLength="28.92" lengthAdjust="spacingAndGlyphs" fill="#111">2050</text>
<text x="784.5" y="366" text-anchor="middle" font-size="16.15" fill="#111">30 Year Reserve Plan Summary</text>
<text transform="translate(42,626) rotate(-90)" text-anchor="middle" font-size="13.8" fill="#111">Projected</text>
<text transform="translate(1366.5,626.4) rotate(-90)" text-anchor="middle" font-size="13.5" fill="#111">Percent Fully Funded</text>
<rect x="1409" y="403" width="10" height="10" fill="#7fc600"/>
<text x="1429" y="412.3" font-size="13.4" fill="#111">Res Balance</text>
<rect x="1409" y="426" width="10" height="10" fill="#ffcc00"/>
<text x="1429" y="435.3" font-size="13.4" fill="#111">Contributions</text>
<rect x="1409" y="449" width="10" height="10" fill="#f05a14"/>
<text x="1429" y="458.3" font-size="13.4" fill="#111">Special Assessment</text>
<rect x="1409" y="472" width="10" height="10" fill="#8000ff"/>
<text x="1429" y="481.3" font-size="13.4" fill="#111">Expenses</text>
<rect x="1409" y="498.5" width="10" height="1.2" fill="#2196ad"/>
<text x="1429" y="504.3" font-size="13.4" fill="#111">Percent Funded</text>
</svg>
<div class="a" style="left:8px;top:882px;width:1553px;height:35px;background:#d3d3d3"></div>
<div class="t" style="left:13px;top:896px;font-size:10px;letter-spacing:-0.35px;color:#0000ff">Loaded...</div>
<div class="t" style="right:11px;top:896px;font-size:10px;letter-spacing:-0.1px;color:#0000ff">Thirty Year Projection</div>
<div class="a" style="left:1px;top:920px;width:1565px;height:1px;background:#ffffff"></div>
<div class="a" style="left:3px;top:921px;width:1563px;height:1px;background:#b8c8dc"></div>
<div class="a" style="left:1px;top:922px;width:1566px;height:1px;background:#ffffff"></div>
<div class="a" style="left:1px;top:923px;width:1566px;height:1px;background:#c4ccda"></div>
<div class="a" style="left:1px;top:924px;width:1566px;height:1px;background:#4a5a8a"></div>
<div class="a" style="left:0;top:925px;width:1567px;height:28px;background:#d6d6d6"></div>
<div class="a" style="left:0;top:953px;width:1567px;height:1px;background:#fff"></div>
<div class="t menu" style="left:11px;top:935px;font-size:10.5px;color:#7c7c7c;letter-spacing:0">Ready</div>
<div class="t menu" style="left:66px;top:935px;font-size:11px;color:#7c7c7c;letter-spacing:0.1px">Working with Diablo View HOA</div>
<div class="t menu" style="right:15px;top:935px;font-size:11px;color:#7c7c7c;letter-spacing:0.08px">HOA Manager 2020 5.2.0.16</div>
<svg class="a" style="left:1554px;top:938px" width="13" height="13"><g fill="#1a1a1a">
<rect x="9" y="1" width="2" height="2"/><rect x="6" y="4" width="2" height="2"/><rect x="9" y="4" width="2" height="2"/>
<rect x="3" y="7" width="2" height="2"/><rect x="6" y="7" width="2" height="2"/><rect x="9" y="7" width="2" height="2"/>
<rect x="0" y="10" width="2" height="2"/><rect x="3" y="10" width="2" height="2"/><rect x="6" y="10" width="2" height="2"/><rect x="9" y="10" width="2" height="2"/></g></svg>
</body></html>
